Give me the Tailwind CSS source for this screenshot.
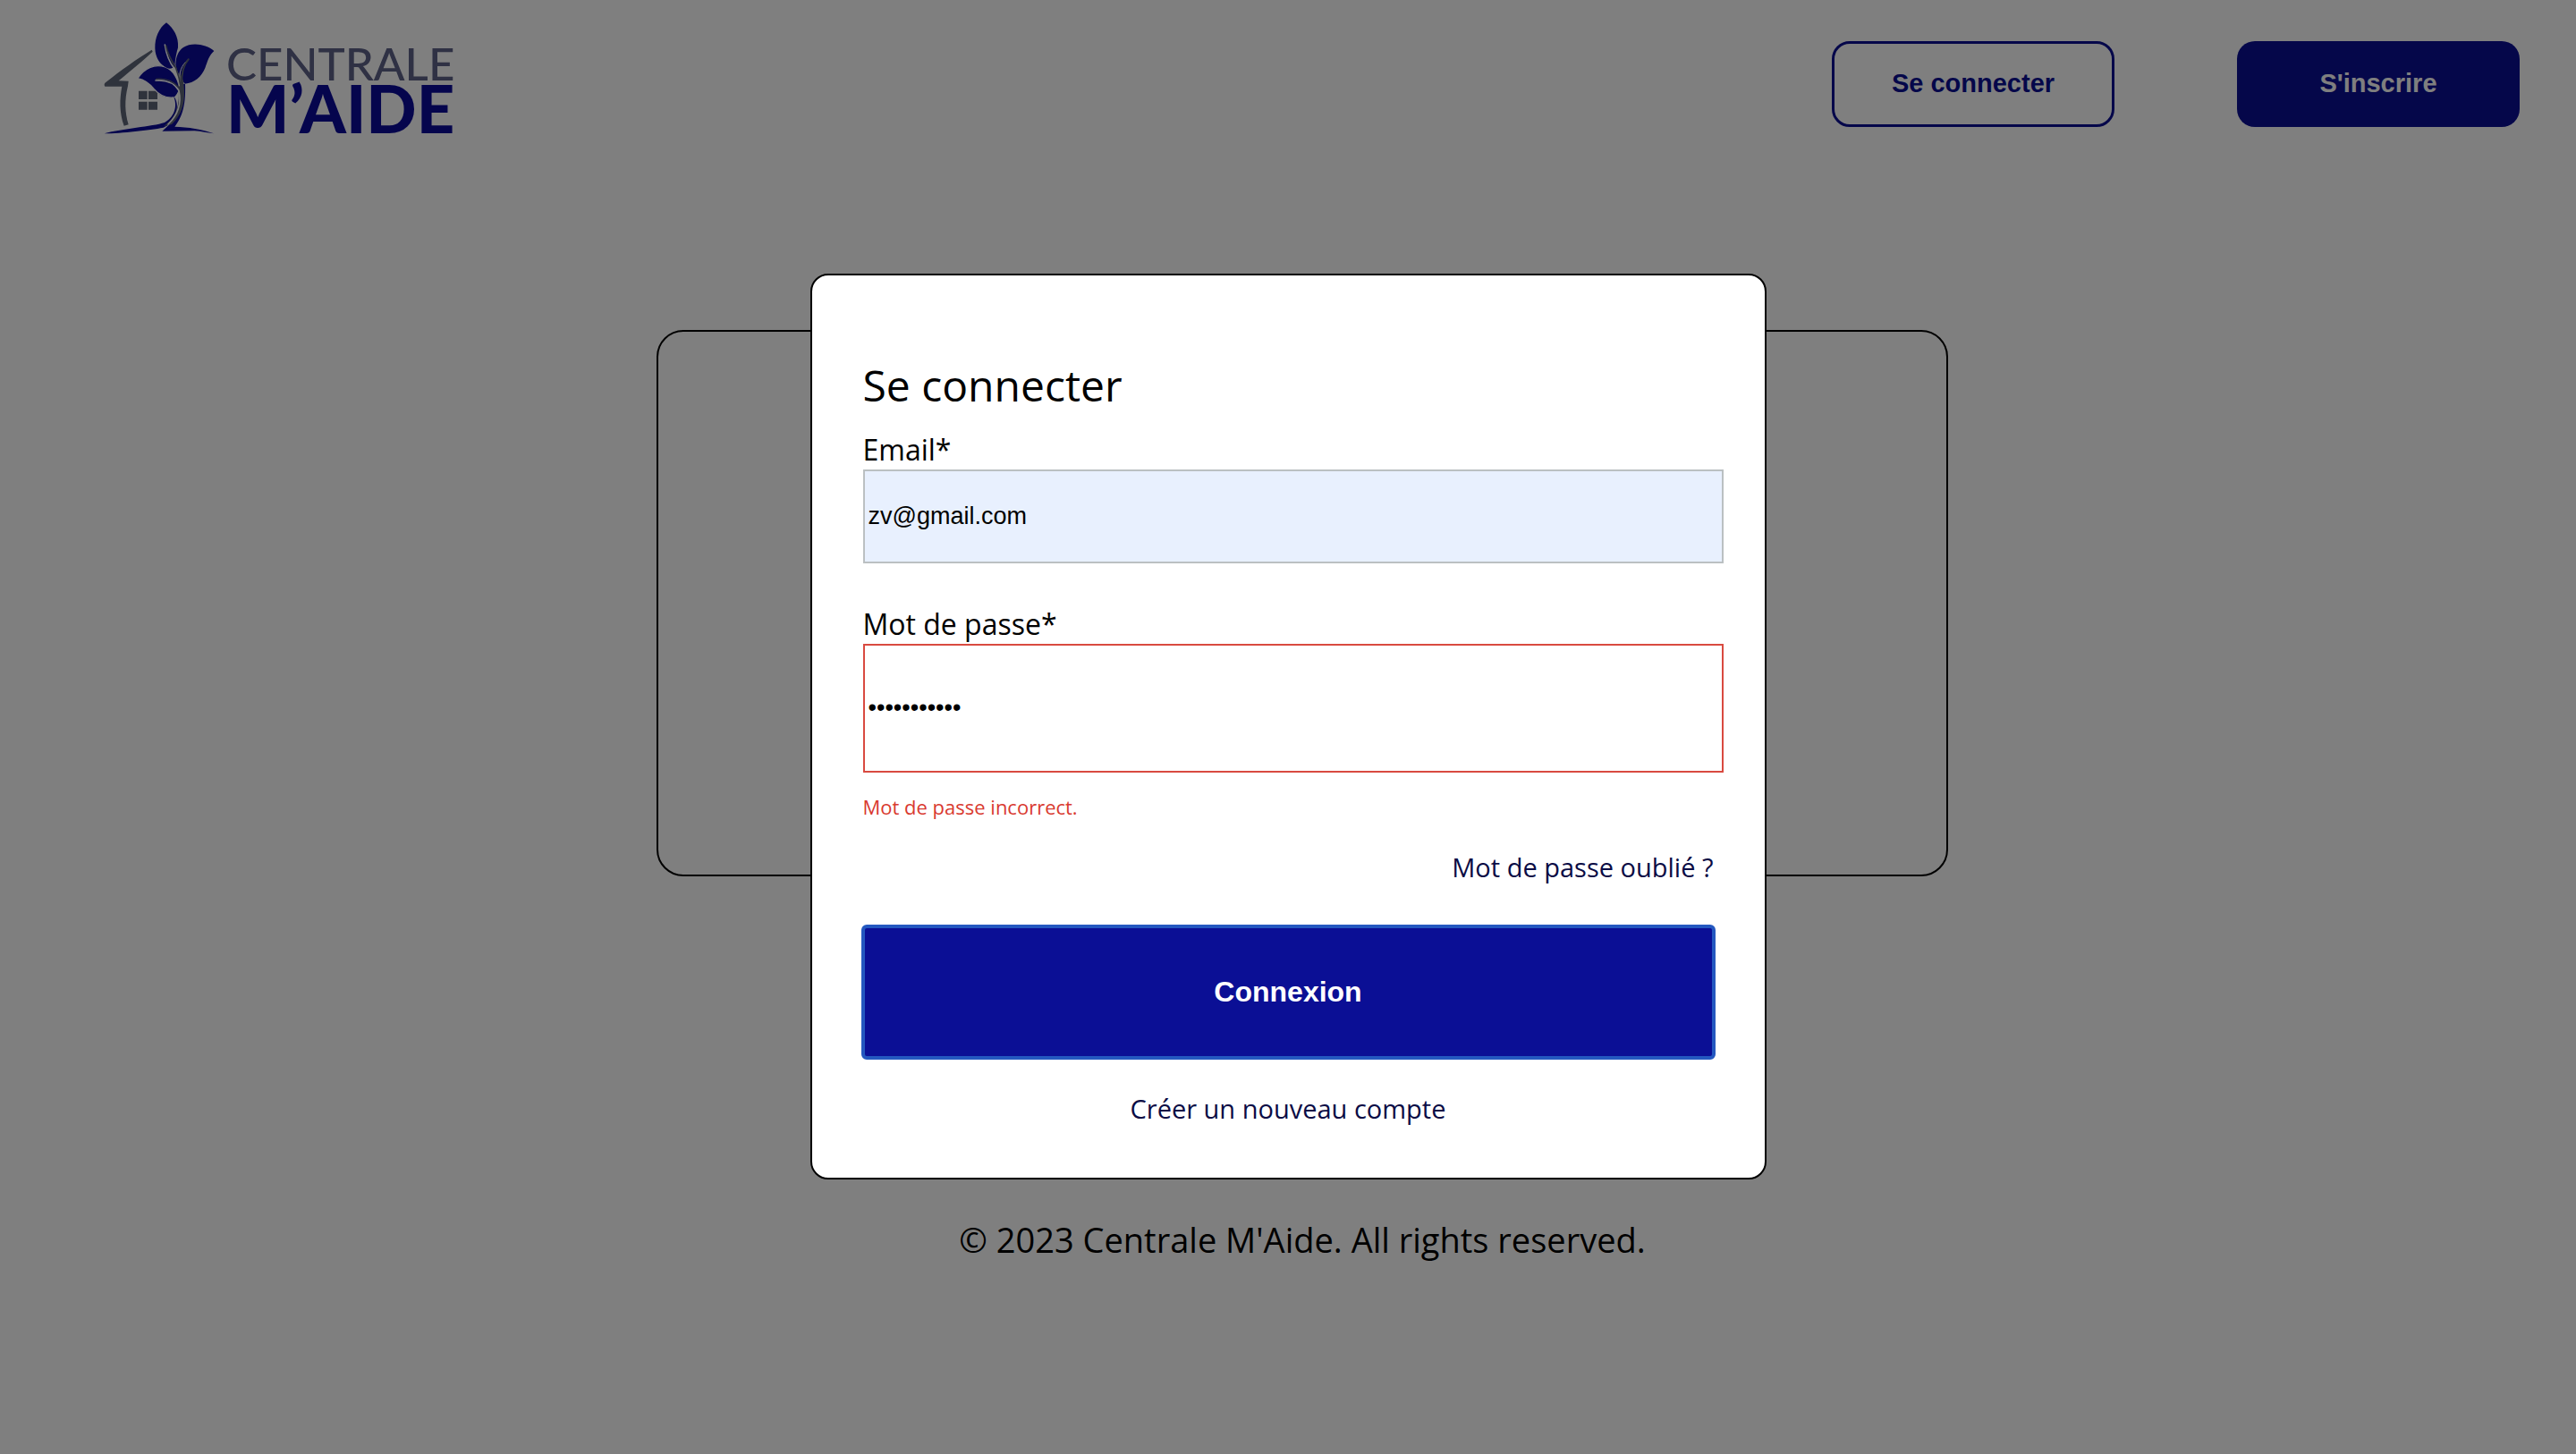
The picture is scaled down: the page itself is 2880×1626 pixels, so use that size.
<!DOCTYPE html>
<html lang="fr">
<head>
<meta charset="utf-8">
<title>Centrale M'Aide</title>
<script src="https://cdn.jsdelivr.net/npm/@tailwindcss/browser@4"></script>
</head>
<body class="min-h-screen bg-white font-['Open_Sans',sans-serif] text-black">
  <header class="flex items-start justify-between pt-6 pr-[63px] pl-[115px]">
    <a href="#" class="flex items-start gap-[13px]" aria-label="Centrale M'Aide">
      <svg class="h-[127px] w-[125px]" viewBox="45 40 375 381" fill="none">
        <!-- house -->
        <path fill="#5f6678" d="M209 135 L212 141 C184 168 140 203 98 239 L131 240 L129 256 C117 305 119 345 131 386 L116 390 C100 345 101 300 109 258 L52 258 C48 252 50 247 56 243 C105 204 160 165 209 135Z"/>
        <path fill="#5f6678" d="M165 273h29v28h-29zM198 273h30v28h-30zM165 309h29v27h-29zM198 309h30v27h-30z"/>
        <!-- leaves -->
        <path fill="#0a0a9a" stroke="#ffffff" stroke-width="4" d="M162 231 C182 198 219 180 254 193 C283 204 299 236 302 266 C298 280 291 292 283 295 C253 298 233 286 217 267 C201 247 186 236 162 231Z"/>
        <path fill="#0a0a9a" d="M258 44 C282 63 300 91 297 128 C292 145 287 168 286 190 C279 198 269 200 260 196 C235 184 221 160 220 130 C219 95 233 62 258 44Z"/>
        <path fill="#0a0a9a" d="M418 139 C392 116 344 108 315 127 C298 138 289 160 289 187 C294 210 305 232 320 249 C352 246 376 226 388 196 C396 174 401 154 418 139Z"/>
        <!-- trunk and ground -->
        <path fill="#0a0a9a" d="M282 291 C294 318 291 355 252 379 C210 393 110 399 50 416 C110 415 200 405 248 396 C263 390 276 380 284 371 L244 408 L352 407 C375 409 396 413 417 416 C380 402 330 394 286 393 C307 365 324 330 321 250 L300 250 C303 290 300 330 290 352 C297 325 294 302 282 291Z"/>
        <path fill="#5f6678" d="M302 208 L315 240 C323 295 318 345 276 385 L250 391 C292 362 305 315 298 262Z"/>
        <!-- veins -->
        <g stroke="#ffffff" stroke-linecap="round">
          <path stroke-width="5" d="M253 118 C257 146 267 176 285 198 C293 213 299 232 302 255"/>
          <path stroke-width="5" d="M222 238 C255 235 285 246 300 272 C308 310 300 350 264 385"/>
          <path stroke-width="3" d="M331 168 C307 188 300 210 303 244"/>
        </g>
        <g stroke="#5f6678" stroke-linecap="round">
          <path stroke-width="5" d="M257 122 C261 148 276 173 290 196 C297 215 303 235 306 258"/>
          <path stroke-width="4" d="M224 233 C255 230 280 239 300 262"/>
          <path stroke-width="6" d="M332 167 C316 185 308 210 310 250"/>
        </g>
      </svg>
      <span class="flex flex-col pt-[19px] font-['Lato',sans-serif]">
        <span class="text-[51px] leading-[56px] font-medium text-[#5e6288]">CENTRALE</span>
        <span class="text-[74px] leading-[44px] font-black text-[#0a0a9a]">M’AIDE</span>
      </span>
    </a>
    <nav class="flex gap-[137px] pt-[22px] font-['Liberation_Sans',sans-serif] text-[29px] font-bold">
      <button class="h-24 w-[316px] rounded-[20px] border-3 border-[#0b0f95] text-[#0b0f95]">Se connecter</button>
      <button class="h-24 w-[316px] rounded-[20px] bg-[#0b0f95] text-white">S'inscrire</button>
    </nav>
  </header>

  <main class="pt-[218px] pl-8">
    <section class="mx-auto h-[611px] w-full max-w-[1444px] rounded-[30px] border-2 border-black"></section>
  </main>
  <footer class="pt-[380px] pl-8 text-center text-[38px] leading-[52px]">© 2023 Centrale M'Aide. All rights reserved.</footer>

  <div class="fixed inset-0 flex items-center justify-center bg-black/50 pb-0.5">
    <form role="dialog" aria-labelledby="titre" class="flex w-full max-w-[1069px] flex-col rounded-[20px] border-2 border-black bg-white px-[57px] pt-[91px] pb-[57px]">
      <h1 id="titre" class="text-5xl leading-[64px]">Se connecter</h1>
      <label for="email" class="mt-[18px] text-[32px] leading-[44px]">Email*</label>
      <input id="email" type="email" value="zv@gmail.com" class="-mr-[11px] h-[105px] border-2 border-[#bbc0c2] bg-[#e8f0fe] px-1 font-['Liberation_Sans',sans-serif] text-[27px]">
      <label for="mdp" class="mt-[46px] text-[32px] leading-[44px]">Mot de passe*</label>
      <input id="mdp" type="password" value="motdepasse1" aria-describedby="erreur" class="-mr-[11px] h-36 border-2 border-[#d94a40] px-1 font-['Liberation_Sans',sans-serif] text-[27px]">
      <p id="erreur" class="mt-[23px] text-[22px] leading-[30px] text-[#d93a30]">Mot de passe incorrect.</p>
      <a href="#" class="mt-[33px] self-end text-[29px] leading-[40px] text-[#0b0c45]">Mot de passe oublié ?</a>
      <button type="submit" class="mt-[46px] h-[147px] rounded-sm bg-[#0b0f95] font-['Liberation_Sans',sans-serif] text-[32px] font-bold text-white outline-4 -outline-offset-2 outline-[#2458c0]">Connexion</button>
      <a href="#" class="mt-[37px] self-center text-[29px] leading-[40px] text-[#0b0c45]">Créer un nouveau compte</a>
    </form>
  </div>
</body>
</html>
